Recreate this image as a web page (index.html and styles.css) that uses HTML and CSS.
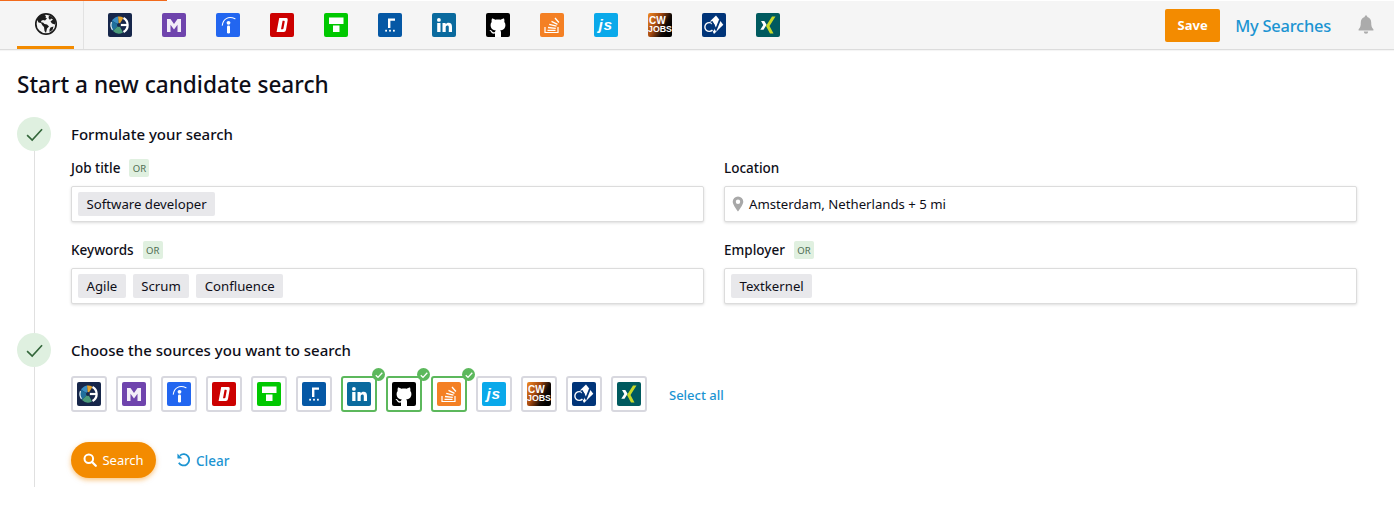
FILE: index.html
```html
<!DOCTYPE html>
<html lang="en">
<head>
<meta charset="utf-8">
<title>Start a new candidate search</title>
<link rel="stylesheet" href="styles.css">
</head>
<body>
<svg class="sprite" xmlns="http://www.w3.org/2000/svg" aria-hidden="true">
  <defs>
    <linearGradient id="cwgrad" x1="0" y1="0" x2="1" y2="0.5">
      <stop offset="0" stop-color="#f08a24"/>
      <stop offset="0.45" stop-color="#a5480f"/>
      <stop offset="0.8" stop-color="#140a05"/>
      <stop offset="1" stop-color="#000"/>
    </linearGradient>
    <symbol id="i-cb" viewBox="0 0 24 24">
      <rect width="24" height="24" rx="2" fill="#16264a"/>
      <path d="M11 12 4 7.800A8.500 8.500 0 0 1 10 3.500Z" fill="#3a8dc2"/>
      <path d="M11 12 10 3.500A8.500 8.500 0 0 1 15.500 4.700Z" fill="#e3a32e"/>
      <path d="M11 12 5 18A8.500 8.500 0 0 1 4 7.800Z" fill="#1f6f9c"/>
      <path d="M11 12 15 19.500A8.500 8.500 0 0 1 5 18Z" fill="#4b9b7a"/>
      <path d="M4.500 16.800A8.300 8.300 0 0 1 3.500 9" fill="none" stroke="#e3ecf0" stroke-width="1.200"/>
      <path d="M15.500 5A8 8 0 0 1 15.500 19" fill="none" stroke="#fff" stroke-width="2.300"/>
      <rect x="11" y="10.900" width="9" height="2.200" fill="#fff"/>
      <circle cx="11" cy="12" r="2" fill="#16264a"/>
    </symbol>
    <symbol id="i-m" viewBox="0 0 24 24">
      <rect width="24" height="24" rx="2" fill="#6f44ad"/>
      <path d="M5 6H8.500L12 11 15.500 6H19V19H15.500V11.800L12 16.500 8.500 11.800V19H5Z" fill="#f2edf8"/>
    </symbol>
    <symbol id="i-ind" viewBox="0 0 24 24">
      <rect width="24" height="24" rx="2" fill="#2266f0"/>
      <circle cx="12.500" cy="9.800" r="1.900" fill="#fff"/>
      <rect x="11" y="12.500" width="3" height="8" rx="1.300" fill="#fff"/>
      <path d="M6.300 12.300C7 6.500 12 2.500 19 5.700" fill="none" stroke="#fff" stroke-width="1.100" stroke-linecap="round"/>
    </symbol>
    <symbol id="i-d" viewBox="0 0 24 24">
      <rect width="24" height="24" rx="2" fill="#cc0000"/>
      <path d="M9.200 5H16.500Q18 5 17.700 7L16 17Q15.600 19 13.800 19H6.600ZM12.600 7.800 11 16.200H12.600Q13.300 16.200 13.500 15.200L14.700 8.800Q14.800 7.800 14 7.800Z" fill="#fff" fill-rule="evenodd"/>
    </symbol>
    <symbol id="i-t" viewBox="0 0 24 24">
      <rect width="24" height="24" rx="2" fill="#00c800"/>
      <rect x="5" y="4.500" width="14.500" height="6.500" fill="#fff"/>
      <rect x="9" y="12.500" width="6.500" height="6.500" fill="#fff"/>
    </symbol>
    <symbol id="i-r" viewBox="0 0 24 24">
      <rect width="24" height="24" rx="2" fill="#0558a5"/>
      <path d="M10 5.500H17V7.700H12.400V15H10Z" fill="#fff"/>
      <rect x="7.200" y="16.800" width="1.800" height="1.800" fill="#fff"/>
      <rect x="11.100" y="16.800" width="1.800" height="1.800" fill="#fff"/>
      <rect x="15" y="16.800" width="1.800" height="1.800" fill="#fff"/>
    </symbol>
    <symbol id="i-in" viewBox="0 0 24 24">
      <rect width="24" height="24" rx="2" fill="#0a6a9e"/>
      <circle cx="6.900" cy="6.900" r="1.900" fill="#fff"/>
      <rect x="5.200" y="10" width="3.300" height="9" fill="#fff"/>
      <path d="M10.500 10H13.600V11.300C14.200 10.300 15.300 9.700 16.600 9.700 19 9.700 20 11.200 20 13.700V19H16.800V14.300C16.800 13 16.400 12.400 15.400 12.400 14.300 12.400 13.700 13.100 13.700 14.400V19H10.500Z" fill="#fff"/>
    </symbol>
    <symbol id="i-gh" viewBox="0 0 24 24">
      <rect width="24" height="24" rx="2" fill="#000"/>
      <path d="M9 24V20.600C6.800 21 5.600 20.300 4.900 18.800 4.500 18 4 17.500 3.300 17.100 4.300 16.800 5.400 17.300 6 18.300 6.700 19.300 7.700 19.300 9 18.900 9.100 18.200 9.400 17.700 9.800 17.300 6.800 16.900 4.600 15.600 4.600 11.900 4.600 10.700 5 9.700 5.700 8.900 5.500 8.100 5.500 6.800 6 5.400 7.200 5.400 8.300 6 9.300 6.800 11 6.300 13 6.300 14.700 6.800 15.700 6 16.800 5.400 18 5.400 18.500 6.800 18.500 8.100 18.300 8.900 19 9.700 19.400 10.700 19.400 11.900 19.400 15.600 17.200 16.900 14.200 17.300 14.700 17.800 15 18.600 15 19.500V24Z" fill="#fff"/>
    </symbol>
    <symbol id="i-so" viewBox="0 0 24 24">
      <rect width="24" height="24" rx="2" fill="#f48024"/>
      <path d="M5 14V19.500H18V14" fill="none" stroke="#fff" stroke-width="1.200"/>
      <path d="M7.500 17.300H15.500M8 14.500 15.800 15.300M9.200 11.300 16.500 13.200M11.500 8.300 17.500 11.300M15 5 18.900 9.500" fill="none" stroke="#fff" stroke-width="1.300"/>
    </symbol>
    <symbol id="i-js" viewBox="0 0 24 24">
      <rect width="24" height="24" rx="2" fill="#0aa9ea"/>
      <text x="4.500" y="16.500" class="js-mark">js</text>
    </symbol>
    <symbol id="i-cw" viewBox="0 0 24 24">
      <rect width="24" height="24" rx="2" fill="url(#cwgrad)"/>
      <text x="1" y="11" class="cw-top">CW</text>
      <text x="0" y="19" class="cw-bot">JOBS</text>
    </symbol>
    <symbol id="i-cv" viewBox="0 0 24 24">
      <rect width="24" height="24" rx="2" fill="#003478"/>
      <path d="M14 2.500 21.300 11.700 12 21 6.300 10Z" fill="#fff"/>
      <circle cx="7.300" cy="14" r="5.800" fill="#003478"/>
      <path d="M10.500 11A4.400 4.400 0 1 0 10.500 17" fill="none" stroke="#fff" stroke-width="1.400"/>
      <path d="M9.700 8.300 14 16.700 18 6.700" fill="none" stroke="#003478" stroke-width="1.800"/>
    </symbol>
    <symbol id="i-x" viewBox="0 0 24 24">
      <rect width="24" height="24" rx="2" fill="#005a5f"/>
      <path d="M5 8H8.300L10.600 11.800 7.500 16.800H4.300L7.300 11.900Z" fill="#fff"/>
      <path d="M16 3.500H19.500L13.500 13 17.500 20.500H14L10 13Z" fill="#c8d92b"/>
    </symbol>
    <symbol id="i-check" viewBox="0 0 14 14">
      <path class="check-path" d="M2.500 7.400 5.600 10.400 11.600 3.800"/>
    </symbol>
  </defs>
</svg>

<header class="topbar">
  <div class="progress"></div>
  <a class="globe-tab">
    <svg class="globe" viewBox="0 0 24 24">
      <circle cx="12" cy="12" r="10.200" fill="#f5f5f5" stroke="#1c1c1c" stroke-width="1.700"/>
      <path d="M9.500 2.200C6.500 3 4 5 3 7.500L4.500 10.500 7 11 8.500 13.500 10 15 10.500 19 12 21 13 16.500 15 14.500 13 12.500 10.500 12 9 10.500 7.500 10.500 7 9 9 8 11 8.500 13 6.500 11.500 5.500 12 4Z" fill="#1c1c1c"/>
      <path d="M15 3.500 14.500 6 16 8 17 6.500 19 7.500 16.500 9.500 18 11.500 21 12.500 21.500 10C21 7 18.500 4.500 15 3.500Z" fill="#1c1c1c"/>
      <path d="M16.500 15.500 19.500 14.500 18.500 18 15.500 20 15.500 17.500Z" fill="#1c1c1c"/>
    </svg>
  </a>
  <div class="divider"></div>
  <nav class="source-nav">
    <svg class="src-icon"><use href="#i-cb"/></svg>
    <svg class="src-icon"><use href="#i-m"/></svg>
    <svg class="src-icon"><use href="#i-ind"/></svg>
    <svg class="src-icon"><use href="#i-d"/></svg>
    <svg class="src-icon"><use href="#i-t"/></svg>
    <svg class="src-icon"><use href="#i-r"/></svg>
    <svg class="src-icon"><use href="#i-in"/></svg>
    <svg class="src-icon"><use href="#i-gh"/></svg>
    <svg class="src-icon"><use href="#i-so"/></svg>
    <svg class="src-icon"><use href="#i-js"/></svg>
    <svg class="src-icon"><use href="#i-cw"/></svg>
    <svg class="src-icon"><use href="#i-cv"/></svg>
    <svg class="src-icon"><use href="#i-x"/></svg>
  </nav>
  <div class="top-actions">
    <button class="save-btn">Save</button>
    <a class="my-searches">My Searches</a>
    <svg class="bell" viewBox="0 0 16 20">
      <path d="M8 0.500C7.200 0.500 6.700 1 6.700 1.900 4.200 2.500 2.800 4.600 2.800 7.200 2.800 11 2.300 12.600.6 14.300V15.600H15.400V14.300C13.700 12.600 13.200 11 13.200 7.200 13.200 4.600 11.800 2.500 9.300 1.900 9.300 1 8.800.5 8 .5Z" fill="#ababab"/>
      <path d="M5.800 16.600A2.200 2.200 0 0 0 10.200 16.600Z" fill="#ababab"/>
    </svg>
  </div>
</header>

<main class="page">
  <h1 class="title">Start a new candidate search</h1>

  <section class="step step-form">
    <div class="step-rail">
      <span class="step-circle"><svg class="step-check"><use href="#i-check"/></svg></span>
    </div>
    <div class="step-body">
      <h2 class="step-title">Formulate your search</h2>
      <div class="field-grid">
        <div class="field">
          <div class="field-label"><label>Job title</label><span class="or">OR</span></div>
          <div class="input"><span class="chip">Software developer</span></div>
        </div>
        <div class="field">
          <div class="field-label"><label>Location</label></div>
          <div class="input input-location">
            <svg class="pin" viewBox="0 0 12 16"><path fill-rule="evenodd" d="M6 0.500A5.300 5.300 0 0 0 .7 5.800C.7 9 6 15.500 6 15.500S11.300 9 11.300 5.800A5.300 5.300 0 0 0 6 .5ZM6 3.600A2.200 2.200 0 1 1 6 8 2.200 2.200 0 0 1 6 3.600Z" fill="#a8a8a8"/></svg>
            <span class="plain">Amsterdam, Netherlands + 5 mi</span>
          </div>
        </div>
        <div class="field">
          <div class="field-label"><label>Keywords</label><span class="or">OR</span></div>
          <div class="input"><span class="chip">Agile</span><span class="chip">Scrum</span><span class="chip">Confluence</span></div>
        </div>
        <div class="field">
          <div class="field-label"><label>Employer</label><span class="or">OR</span></div>
          <div class="input"><span class="chip">Textkernel</span></div>
        </div>
      </div>
    </div>
  </section>

  <section class="step step-sources">
    <div class="step-rail">
      <span class="step-circle"><svg class="step-check"><use href="#i-check"/></svg></span>
    </div>
    <div class="step-body">
      <h2 class="step-title">Choose the sources you want to search</h2>
      <div class="source-row">
        <span class="source"><svg class="src-icon"><use href="#i-cb"/></svg></span>
        <span class="source"><svg class="src-icon"><use href="#i-m"/></svg></span>
        <span class="source"><svg class="src-icon"><use href="#i-ind"/></svg></span>
        <span class="source"><svg class="src-icon"><use href="#i-d"/></svg></span>
        <span class="source"><svg class="src-icon"><use href="#i-t"/></svg></span>
        <span class="source"><svg class="src-icon"><use href="#i-r"/></svg></span>
        <span class="source selected"><svg class="src-icon"><use href="#i-in"/></svg><span class="tick"><svg class="tick-mark"><use href="#i-check"/></svg></span></span>
        <span class="source selected"><svg class="src-icon"><use href="#i-gh"/></svg><span class="tick"><svg class="tick-mark"><use href="#i-check"/></svg></span></span>
        <span class="source selected"><svg class="src-icon"><use href="#i-so"/></svg><span class="tick"><svg class="tick-mark"><use href="#i-check"/></svg></span></span>
        <span class="source"><svg class="src-icon"><use href="#i-js"/></svg></span>
        <span class="source"><svg class="src-icon"><use href="#i-cw"/></svg></span>
        <span class="source"><svg class="src-icon"><use href="#i-cv"/></svg></span>
        <span class="source"><svg class="src-icon"><use href="#i-x"/></svg></span>
        <a class="select-all">Select all</a>
      </div>
      <div class="actions">
        <button class="search-btn">
          <svg class="search-icon" viewBox="0 0 14 14"><circle cx="5.800" cy="5.800" r="4.300" fill="none" stroke="#fff" stroke-width="2"/><path d="M9 9 12.800 12.800" stroke="#fff" stroke-width="2.200" stroke-linecap="round"/></svg>
          Search
        </button>
        <a class="clear">
          <svg class="clear-icon" viewBox="0 0 16 16"><path d="M4.200 3.800A6 6 0 1 1 3 11.500" fill="none" stroke="#1b94d2" stroke-width="1.900"/><path d="M1.500 1.500V6.800H6.800Z" fill="#1b94d2"/></svg>
          Clear
        </a>
      </div>
    </div>
  </section>
</main>
</body>
</html>
```

FILE: styles.css
```css
* { box-sizing: border-box; }

html, body { margin: 0; padding: 0; }

body {
  width: 1394px;
  height: 507px;
  overflow: hidden;
  background: #fff;
  color: #0e0e18;
  font-family: "Noto Sans", "Open Sans", sans-serif;
}

.sprite { position: absolute; width: 0; height: 0; }

.js-mark {
  font: italic 700 15.500px "Liberation Sans", sans-serif;
  letter-spacing: 0.8px;
  fill: #fff;
}

.cw-top {
  font: 700 10px "Liberation Sans", sans-serif;
  fill: #fff;
}

.cw-bot {
  font: 700 8.800px "Liberation Sans", sans-serif;
  fill: #fff;
}

.check-path {
  fill: none;
  stroke: currentColor;
  stroke-width: var(--check, 1.800);
}

/* top bar */
.topbar {
  position: relative;
  display: flex;
  align-items: center;
  height: 50px;
  padding-left: 17px;
  background: #f5f5f5;
  border-top: 1px solid #fff;
  border-bottom: 1px solid #dcdcdc;
  box-shadow: 0 1px 1px rgba(0, 0, 0, .04);
}

.progress {
  position: absolute;
  left: 0;
  top: -1px;
  width: 167px;
  height: 1px;
  background: #f26a1b;
}

.globe-tab {
  display: flex;
  align-items: center;
  justify-content: center;
  width: 57px;
  height: 48px;
  border-bottom: 3px solid #f38b00;
  padding-top: 1px;
}

.globe { width: 24px; height: 24px; }

.divider {
  width: 1px;
  height: 48px;
  margin-left: 9px;
  background: #e2e2e2;
}

.source-nav {
  display: flex;
  gap: 30px;
  margin-left: 24px;
}

.src-icon { display: block; width: 24px; height: 24px; }

.top-actions {
  display: flex;
  align-items: center;
  margin-left: auto;
}

.save-btn {
  width: 55px;
  height: 33px;
  padding: 0;
  border: 0;
  border-radius: 2px;
  background: #f38b00;
  color: #fff;
  font: 700 13px "Noto Sans", sans-serif;
}

.my-searches {
  margin-left: 15px;
  color: #1b94d2;
  font-size: 16.400px;
  font-weight: 500;
  letter-spacing: -0.2px;
}

.bell {
  width: 16px;
  height: 20px;
  margin: 0 20px 0 27px;
}

/* page */
.page { padding: 0 37px 0 17px; }

.title {
  margin: 0;
  padding-top: 19px;
  height: 67px;
  font-size: 22.600px;
  line-height: 32px;
  font-weight: 500;
}

.step {
  display: flex;
  gap: 20px;
}

.step-form { height: 216px; }
.step-sources { height: 154px; }

.step-rail {
  position: relative;
  display: flex;
  justify-content: center;
  flex: none;
  width: 34px;
}

.step-rail::after {
  content: "";
  position: absolute;
  left: 17px;
  top: 34px;
  bottom: 0;
  width: 1px;
  background: #e0e0e0;
}

.step-circle {
  display: flex;
  align-items: center;
  justify-content: center;
  width: 34px;
  height: 34px;
  border-radius: 50%;
  background: #dff0e0;
  color: #33663a;
  --check: 1;
}

.step-check { width: 23px; height: 23px; }

.step-body { flex: 1; min-width: 0; }

.step-title {
  margin: 0;
  height: 34px;
  font-size: 15px;
  line-height: 35px;
  font-weight: 500;
}

.field-grid {
  display: grid;
  grid-template-columns: 1fr 1fr;
  column-gap: 20px;
  row-gap: 11px;
}

.field-label {
  display: flex;
  align-items: center;
  gap: 9px;
  height: 18px;
  margin-top: 8px;
  margin-bottom: 9px;
  font-size: 13.500px;
  font-weight: 500;
}

.or {
  display: flex;
  align-items: center;
  justify-content: center;
  width: 20px;
  height: 18px;
  border-radius: 2px;
  background: #e0f0e0;
  color: #4e6b50;
  font-size: 9.500px;
  font-weight: 400;
}

.input {
  display: flex;
  align-items: center;
  gap: 7px;
  height: 36px;
  padding: 0 6px;
  background: #fff;
  border: 1px solid #dcdcdc;
  border-radius: 2px;
  box-shadow: 0 1px 3px rgba(0, 0, 0, .14);
  font-size: 13.200px;
}

.input-location { gap: 5px; padding-left: 7px; }

.chip {
  display: flex;
  align-items: center;
  height: 24px;
  padding: 0 8.500px;
  border-radius: 2px;
  background: #e8e8eb;
}

.pin { width: 12px; height: 16px; }

/* sources */
.source-row {
  display: flex;
  align-items: center;
  gap: 9px;
  margin-top: 9px;
}

.source {
  position: relative;
  display: flex;
  align-items: center;
  justify-content: center;
  width: 36px;
  height: 36px;
  border: 2px solid #d8d8df;
  border-radius: 3px;
  background: #fff;
}

.source.selected { border-color: #5cb85c; }

.tick {
  position: absolute;
  right: -10px;
  top: -10px;
  display: flex;
  align-items: center;
  justify-content: center;
  width: 13px;
  height: 13px;
  border-radius: 50%;
  background: #5cb85c;
  color: #fff;
}

.tick-mark { width: 10px; height: 10px; }

.select-all {
  margin-left: 13px;
  padding-top: 1px;
  color: #1b94d2;
  font-size: 13px;
  font-weight: 500;
}

.actions {
  display: flex;
  align-items: center;
  gap: 20px;
  margin-top: 30px;
}

.search-btn {
  display: flex;
  align-items: center;
  justify-content: center;
  gap: 5px;
  width: 85px;
  height: 36px;
  padding: 0;
  border: 0;
  border-radius: 18px;
  background: #f38b00;
  color: #fff;
  font: 400 13px "Noto Sans", sans-serif;
  box-shadow: 0 2px 5px rgba(243, 139, 0, .5);
}

.search-icon { width: 14px; height: 14px; }

.clear {
  display: flex;
  align-items: center;
  gap: 5px;
  padding-top: 2px;
  color: #1b94d2;
  font-size: 13.500px;
  font-weight: 500;
}

.clear-icon { width: 15px; height: 15px; margin-top: -3px; }
```
